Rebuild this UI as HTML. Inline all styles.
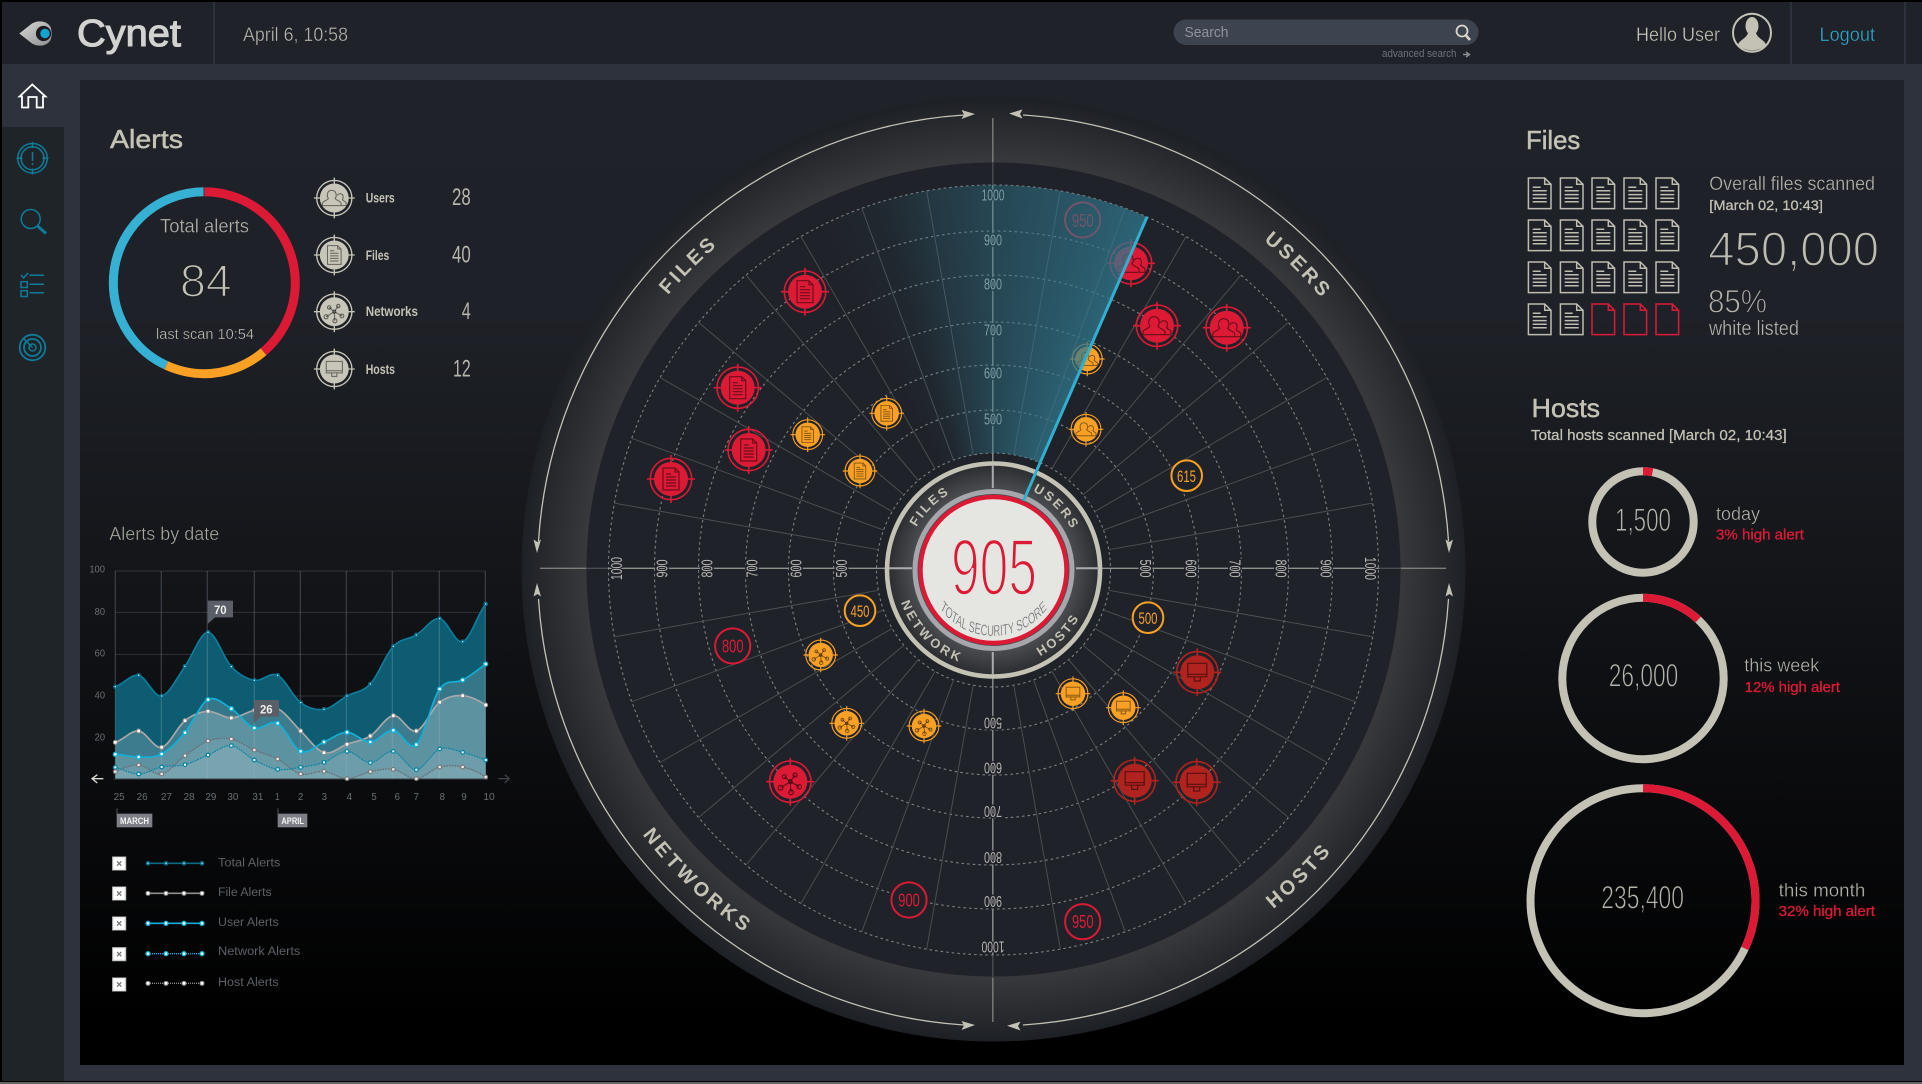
<!DOCTYPE html>
<html><head><meta charset="utf-8"><title>Cynet</title>
<style>
html,body{margin:0;padding:0;background:#000;width:1922px;height:1084px;overflow:hidden}
svg{display:block;position:absolute;left:0;top:0}
text{font-family:"Liberation Sans",sans-serif;fill:#c4c2b5}
.t{stroke:#1e2127;stroke-width:.35}
.d{stroke:#0d0e11;stroke-width:.35}
.h{font-size:26px;stroke:#c4c2b5;stroke-width:.5}
.ax{font-size:16px;fill:#b4b6b2;stroke:#1f2228;stroke-width:3px;paint-order:stroke}
.arc{font-size:20px;font-weight:bold;letter-spacing:3px;fill:#c4c2b5;text-anchor:middle}
.arc2{font-size:13px;font-weight:bold;letter-spacing:2.4px;fill:#c4c2b5;text-anchor:middle}
.ct{font-size:14px;font-weight:bold}
.n{font-size:24px;fill:#b5b5ac}
.rr{font-size:18px;fill:#dc1a36}
.ro{font-size:17px;fill:#f9a025}
.c{font-size:30px;fill:#6b6e73}
.lg{font-size:36px;fill:#5d6066}
</style></head><body>
<svg width="1922" height="1084" viewBox="0 0 1922 1084" xmlns="http://www.w3.org/2000/svg">
<defs>
<linearGradient id="bg" gradientUnits="userSpaceOnUse" x1="0" y1="80" x2="0" y2="1064">
<stop offset="0" stop-color="#1f2228"/><stop offset=".24" stop-color="#1e2127"/><stop offset=".96" stop-color="#000"/></linearGradient>
<radialGradient id="band" gradientUnits="userSpaceOnUse" cx="993.5" cy="569.5" r="472">
<stop offset=".862" stop-color="#38393c"/><stop offset="1" stop-color="#1d2025"/></radialGradient>
<radialGradient id="band2" gradientUnits="userSpaceOnUse" cx="993.5" cy="570" r="106">
<stop offset=".76" stop-color="#4b4c4f"/><stop offset="1" stop-color="#2a2c30"/></radialGradient>
<linearGradient id="logo" x1="0" y1="0" x2="1" y2="1"><stop offset="0" stop-color="#d8d8d8"/><stop offset="1" stop-color="#8f8f8f"/></linearGradient>
<path id="s" d="M993.5 453V185" fill="none" stroke="#4b4e52" stroke-width="1"/>
<path id="pF" d="M567.5 570A426 426 0 0 1 993.5 144"/>
<path id="pU" d="M993.5 144A426 426 0 0 1 1419.5 570"/>
<path id="pN" d="M554 570A439.5 439.5 0 0 0 993.5 1009.5"/>
<path id="pH" d="M993.5 1009.5A439.5 439.5 0 0 0 1433 570"/>
<path id="iF" d="M905.5 570A88 88 0 0 1 993.5 482"/>
<path id="iU" d="M993.5 482A88 88 0 0 1 1081.5 570"/>
<path id="iN" d="M895.5 570A98 98 0 0 0 993.5 668"/>
<path id="iH" d="M993.5 668A98 98 0 0 0 1091.5 570"/>
<path id="iS" d="M-110 0A110 66 0 0 0 110 0"/>
<g id="tg"><circle r="17" fill="currentColor"/><circle r="20.7" fill="none" stroke="currentColor" stroke-width="1.6"/><path d="M0-24V-16.5M0 24V16.5M-24 0H-16.5M24 0H16.5" stroke="currentColor" stroke-width="1.6"/></g>
<g id="mF"><use href="#tg"/><path d="M-8-11H4L8-7V11H-8ZM4-11V-7H8M-5-5H0M-5-2H5M-5 1H5M-5 4H5M-5 7H5" fill="none" stroke="#000" stroke-opacity=".5" stroke-width="1.2"/></g>
<g id="mU"><use href="#tg"/><path d="M-14 9V6.5C-14 3.5-8 3-7 .5C-9-2-9-9-3-9C3-9 3-2 1 .5C2 3 8 3.5 8 6.5V9ZM8 9H14V6C14 4 10 3.5 9.5 2C11 0 11-5 7-5C5-5 4-4 3.5-3" fill="none" stroke="#000" stroke-opacity=".5" stroke-width="1.2"/></g>
<g id="mN"><use href="#tg"/><path d="M0 0L-6-5M0 0L4.7-6.7M0 0L9 5M0 0L.7 10.7M0 0L-9.7 6" stroke="#000" stroke-opacity=".5" stroke-width="1.2"/><g fill="none" stroke="#000" stroke-opacity=".55" stroke-width="1.2"><circle r="1.8"/><circle cx="-6" cy="-5" r="2"/><circle cx="4.7" cy="-6.7" r="2"/><circle cx="9" cy="5" r="2.2"/><circle cx=".7" cy="10.7" r="2.4"/><circle cx="-9.7" cy="6" r="2.4"/></g></g>
<g id="mH"><use href="#tg"/><path d="M-9.5-9H9.5V4.5H-9.5ZM-9.5 2H9.5M-3 4.5V8.7H3V4.5" fill="none" stroke="#000" stroke-opacity=".5" stroke-width="1.2"/></g>
<g id="doc" fill="none" stroke="#bdbcaf" stroke-width="1.5"><path d="M.7.7H17L23.3 7V31.3H.7ZM17 .7V7H23.3"/><path d="M5 10H13M5 13.5H19M5 17.3H19M5 21H19M5 24.5H19"/></g>
<g id="docr" fill="none" stroke="#dc1a36" stroke-width="1.5"><path d="M.7.7H17L23.3 7V31.3H.7ZM17 .7V7H23.3"/></g>
<g id="pT"><circle r="7" fill="#0b6a85"/><circle r="2" fill="#dff"/></g>
<g id="pW"><circle r="7.5" fill="#8f8f8f"/><rect x="-4" y="-4" width="8" height="8" rx="2" fill="#fff"/></g>
<g id="pC"><circle r="8" fill="#12b0d8"/><rect x="-3.5" y="-3.5" width="7" height="7" fill="#fff"/></g>
<g id="pN2"><circle r="7.5" fill="#0c86a6"/><rect x="-3" y="-3" width="6" height="6" fill="#fff"/></g>
<g id="pH2"><circle r="7.5" fill="#77777b"/><rect x="-3.5" y="-3.5" width="7" height="7" fill="#eee"/></g>
<g id="cb"><rect x="-20" y="-20" width="41" height="41" fill="#ececec" stroke="#8a8a8a" stroke-width="2"/><rect x="-15" y="-15" width="31" height="31" fill="#fff"/><path d="M-6-6L7 7M7-6L-6 7" stroke="#777" stroke-width="4"/></g>
</defs>

<!-- frame -->
<rect width="1922" height="1084" fill="#000"/>
<rect y="1082" width="1922" height="2" fill="#666"/>
<rect x="2" y="2" width="1920" height="1079" fill="#2d323c"/>
<rect x="2" y="2" width="1920" height="62" fill="#1f2228"/>
<rect x="2" y="127" width="62" height="954" fill="#1f2429"/>
<rect x="80" y="80" width="1824" height="985" fill="url(#bg)"/>
<rect x="213" y="2" width="2" height="62" fill="#2d323c"/>
<rect x="1790" y="2" width="2" height="62" fill="#2d323c"/>
<rect x="1904" y="2" width="2" height="62" fill="#2d323c"/>

<!-- logo -->
<path d="M19.3 33.5L32 23.5C38 20 47 20.5 50.5 27C52 31 52 36 50.5 40C47 46.5 38 47 32 43.5Z" fill="url(#logo)"/>
<circle cx="43.5" cy="33.5" r="7.6" fill="#1a1c20"/><circle cx="45" cy="33.5" r="4.7" fill="#15a3cf"/>
<text x="77" y="46" font-size="38" textLength="104" lengthAdjust="spacingAndGlyphs" style="fill:#d2d2d0;stroke:#d2d2d0;stroke-width:1.1">Cynet</text>
<text class="t" x="243" y="41" font-size="19" textLength="105" lengthAdjust="spacingAndGlyphs" style="fill:#b5b5ac">April 6, 10:58</text>

<!-- search -->
<rect x="1173.5" y="19.5" width="305" height="25.5" rx="12.7" fill="#3e4350"/>
<text x="1184.5" y="37" font-size="15" textLength="44" lengthAdjust="spacingAndGlyphs" style="fill:#8f929a">Search</text>
<circle cx="1462" cy="31" r="5.5" fill="none" stroke="#d8d6ca" stroke-width="1.8"/><path d="M1466 35.5L1470 40" stroke="#d8d6ca" stroke-width="2.6"/>
<text x="1382" y="57" font-size="11" textLength="74.5" lengthAdjust="spacingAndGlyphs" style="fill:#6f7279">advanced search</text>
<path d="M1463 54.5H1468M1466 52L1469.5 54.5L1466 57" fill="none" stroke="#8a8d92" stroke-width="1.4"/>
<text class="t" x="1636" y="41" font-size="19" textLength="84" lengthAdjust="spacingAndGlyphs">Hello User</text>
<circle cx="1752" cy="32.7" r="19" fill="none" stroke="#c4c2b5" stroke-width="2"/>
<ellipse cx="1752" cy="26" rx="6.5" ry="9" fill="#c4c2b5"/>
<path d="M1738 45C1739 40 1746 39 1748 33H1756C1758 39 1765 40 1766 45Q1752 56 1738 45Z" fill="#c4c2b5"/>
<text class="t" x="1819.5" y="41" font-size="19" textLength="55.5" lengthAdjust="spacingAndGlyphs" style="fill:#2ea6c9">Logout</text>

<!-- sidebar icons -->
<path d="M19.5 96.5L32.3 84.5L45.5 96.5H43V107.5H36.7V97H28.3V107.5H22V96.5Z" fill="none" stroke="#fff" stroke-width="1.8"/>
<g fill="none" stroke="#0e7c99" stroke-width="1.5">
<circle cx="32.5" cy="158.3" r="14.8"/><circle cx="32.5" cy="158.3" r="11.5"/>
<path d="M32.5 142V148M32.5 168.5V174.5M16.5 158.3H22.5M42.5 158.3H48.5M32.5 152V161M32.5 163V165"/>
<circle cx="30.7" cy="219" r="9.5"/>
<path d="M37.5 226L46 233.5" stroke-width="3"/>
<path d="M21 275L23.5 278L28 273M29.5 275.3H44M29.5 284.3H44M29.5 292.7H44"/>
<rect x="21" y="281.7" width="6.3" height="5.8"/><rect x="21" y="290.7" width="6.3" height="5.8"/>
<circle cx="32.5" cy="347.5" r="12.8" stroke-width="1.8"/><circle cx="32.5" cy="347.5" r="8.5" stroke-width="1.8"/><circle cx="32.5" cy="347.5" r="3.5"/>
<path d="M32.5 347.5L23.5 338.5"/>
</g>

<!-- Alerts -->
<text class="h" x="110" y="148" textLength="73" lengthAdjust="spacingAndGlyphs">Alerts</text>
<g fill="none" stroke-width="9" transform="rotate(-90 204.3 282.7)">
<circle cx="204.3" cy="282.7" r="91" stroke="#36b1d3" pathLength="360" stroke-dasharray="155 360" stroke-dashoffset="-205"/>
<circle cx="204.3" cy="282.7" r="91" stroke="#f9a025" pathLength="360" stroke-dasharray="65.5 360" stroke-dashoffset="-139.5"/>
<circle cx="204.3" cy="282.7" r="91" stroke="#dc1a36" pathLength="360" stroke-dasharray="139.5 360"/>
</g>
<text class="t" x="160" y="232.7" font-size="19" textLength="89" lengthAdjust="spacingAndGlyphs" style="fill:#b5b5ac">Total alerts</text>
<text x="180" y="296.7" font-size="45" textLength="51.7" lengthAdjust="spacingAndGlyphs" style="fill:#c4c2b5;stroke:#1d2025;stroke-width:1.5">84</text>
<text class="t" x="156" y="339" font-size="15" textLength="98" lengthAdjust="spacingAndGlyphs">last scan 10:54</text>

<use href="#mU" transform="translate(334.3 198) scale(.85)" style="color:#c8c6b8"/>
<use href="#mF" transform="translate(334.3 255) scale(.85)" style="color:#c8c6b8"/>
<use href="#mN" transform="translate(334.3 311.7) scale(.85)" style="color:#c8c6b8"/>
<use href="#mH" transform="translate(334.3 369) scale(.85)" style="color:#c8c6b8"/>
<text class="ct" x="365.7" y="202.7" textLength="29" lengthAdjust="spacingAndGlyphs">Users</text>
<text class="ct" x="365.7" y="260" textLength="23.6" lengthAdjust="spacingAndGlyphs">Files</text>
<text class="ct" x="365.7" y="316" textLength="52.3" lengthAdjust="spacingAndGlyphs">Networks</text>
<text class="ct" x="365.7" y="374" textLength="29.3" lengthAdjust="spacingAndGlyphs">Hosts</text>
<text class="n" x="452" y="205" textLength="18.7" lengthAdjust="spacingAndGlyphs">28</text>
<text class="n" x="452" y="262.7" textLength="18.7" lengthAdjust="spacingAndGlyphs">40</text>
<text class="n" x="461.7" y="319" textLength="9" lengthAdjust="spacingAndGlyphs">4</text>
<text class="n" x="453" y="376.7" textLength="17.7" lengthAdjust="spacingAndGlyphs">12</text>

<text class="d" x="109.3" y="540" font-size="18" textLength="110" lengthAdjust="spacingAndGlyphs" style="fill:#a8a89f">Alerts by date</text>

<!-- Chart in 3x coordinates -->
<g transform="translate(60 500) scale(.33333)">
<text class="c" x="88" y="218" textLength="47" lengthAdjust="spacingAndGlyphs">100</text>
<text class="c" x="104" y="345" textLength="31" lengthAdjust="spacingAndGlyphs">80</text>
<text class="c" x="104" y="470" textLength="31" lengthAdjust="spacingAndGlyphs">60</text>
<text class="c" x="104" y="596" textLength="31" lengthAdjust="spacingAndGlyphs">40</text>
<text class="c" x="104" y="722" textLength="31" lengthAdjust="spacingAndGlyphs">20</text>
<path d="M166 213H1277M166 337H1277M166 463H1277M166 588H1277M166 713H1277" fill="none" stroke="#4c5057" stroke-width="3" stroke-dasharray="3 3"/>

<path fill="#0d5c72" d="M166 560C189 554 213 521.3 236 526S282 592.5 305 588S352 530.8 375 499S421 396.8 444 397S491 476 514 500S560 536.7 583 541S630 514.8 653 526S699 591 722 608S769 631.3 792 628S838 600.7 861 588S908 576.8 931 552S977 463.5 1000 439S1046 418.8 1069 405S1116 352.7 1139 356S1185 432.3 1208 425S1254 340 1277 312V838H166Z"/>
<path fill="#fff" fill-opacity=".2" d="M166 727C189 721 213 690.5 236 693S282 747.2 305 742S352 680 375 662S421 635.3 444 634S491 654.5 514 654S560 635.7 583 631S630 615.7 653 626S699 671 722 693S769 751.3 792 758S838 741.3 861 733S908 722.3 931 708S977 649.5 1000 647S1046 699.7 1069 693S1116 624.7 1139 607S1185 585.7 1208 587S1254 600 1277 615V838H166Z"/>
<path fill="#fff" fill-opacity=".17" d="M166 763C189 764 213 771.2 236 771S282 774.2 305 762S352 725.2 375 698S421 611 444 599S491 611.8 514 626S560 676.7 583 684S630 658.3 653 670S699 744.7 722 754S769 735.5 792 726S838 697 861 697S908 727 931 726S977 689.7 1000 691S1046 754.7 1069 734S1116 599.3 1139 567S1185 552.5 1208 540S1254 510 1277 492V838H166Z"/>
<path fill="#fff" fill-opacity=".08" d="M166 815C189 805 213 793.8 236 795S282 826.7 305 822S352 783.5 375 767S421 731.3 444 723S491 712.5 514 717S560 740 583 750S630 765 653 777S699 815.8 722 822S769 811.7 792 814S838 836 861 836S908 819.7 931 815S977 804.5 1000 808S1046 837.2 1069 836S1116 806.8 1139 801S1185 796 1208 801S1254 815 1277 831V838H166Z"/>
<path fill="#fff" fill-opacity=".1" d="M166 802C189 808 213 822 236 822S282 805.7 305 801S352 800 375 794S421 774.5 444 765S491 734.5 514 737S560 768.2 583 780S630 804.3 653 808S699 805.5 722 802S769 795 792 787S838 754 861 754S908 788 931 788S977 750.5 1000 754S1046 810 1069 809S1116 755.7 1139 747S1185 751.5 1208 757S1254 772 1277 780V838H166Z"/>

<path d="M166 213V838M304 213V838M442 213V838M583 213V838M721 213V838M859 213V838M997 213V838M1138 213V838M1276 213V838" stroke="#a4b4c4" stroke-opacity=".25" stroke-width="4"/>
<path d="M160 838H1284" stroke="#24272d" stroke-width="4"/>

<g fill="none">
<path stroke="#6c6e72" stroke-width="4" stroke-dasharray="5 3" d="M166 815C189 805 213 793.8 236 795S282 826.7 305 822S352 783.5 375 767S421 731.3 444 723S491 712.5 514 717S560 740 583 750S630 765 653 777S699 815.8 722 822S769 811.7 792 814S838 836 861 836S908 819.7 931 815S977 804.5 1000 808S1046 837.2 1069 836S1116 806.8 1139 801S1185 796 1208 801S1254 815 1277 831"/>
<path stroke="#0c86a6" stroke-width="4" stroke-dasharray="5 3" d="M166 802C189 808 213 822 236 822S282 805.7 305 801S352 800 375 794S421 774.5 444 765S491 734.5 514 737S560 768.2 583 780S630 804.3 653 808S699 805.5 722 802S769 795 792 787S838 754 861 754S908 788 931 788S977 750.5 1000 754S1046 810 1069 809S1116 755.7 1139 747S1185 751.5 1208 757S1254 772 1277 780"/>
<path stroke="#a9a9a9" stroke-width="5" d="M166 727C189 721 213 690.5 236 693S282 747.2 305 742S352 680 375 662S421 635.3 444 634S491 654.5 514 654S560 635.7 583 631S630 615.7 653 626S699 671 722 693S769 751.3 792 758S838 741.3 861 733S908 722.3 931 708S977 649.5 1000 647S1046 699.7 1069 693S1116 624.7 1139 607S1185 585.7 1208 587S1254 600 1277 615"/>
<path stroke="#12b0d8" stroke-width="5" d="M166 763C189 764 213 771.2 236 771S282 774.2 305 762S352 725.2 375 698S421 611 444 599S491 611.8 514 626S560 676.7 583 684S630 658.3 653 670S699 744.7 722 754S769 735.5 792 726S838 697 861 697S908 727 931 726S977 689.7 1000 691S1046 754.7 1069 734S1116 599.3 1139 567S1185 552.5 1208 540S1254 510 1277 492"/>
<path stroke="#0d7d9c" stroke-width="5" d="M166 560C189 554 213 521.3 236 526S282 592.5 305 588S352 530.8 375 499S421 396.8 444 397S491 476 514 500S560 536.7 583 541S630 514.8 653 526S699 591 722 608S769 631.3 792 628S838 600.7 861 588S908 576.8 931 552S977 463.5 1000 439S1046 418.8 1069 405S1116 352.7 1139 356S1185 432.3 1208 425S1254 340 1277 312"/>
</g>
<g>
<use href="#pT" x="166" y="560"/><use href="#pT" x="236" y="526"/><use href="#pT" x="305" y="588"/><use href="#pT" x="375" y="499"/><use href="#pT" x="444" y="397"/><use href="#pT" x="514" y="500"/><use href="#pT" x="583" y="541"/><use href="#pT" x="653" y="526"/><use href="#pT" x="722" y="608"/><use href="#pT" x="792" y="628"/><use href="#pT" x="861" y="588"/><use href="#pT" x="931" y="552"/><use href="#pT" x="1000" y="439"/><use href="#pT" x="1069" y="405"/><use href="#pT" x="1139" y="356"/><use href="#pT" x="1208" y="425"/><use href="#pT" x="1277" y="312"/>
<use href="#pW" x="166" y="727"/><use href="#pW" x="236" y="693"/><use href="#pW" x="305" y="742"/><use href="#pW" x="375" y="662"/><use href="#pW" x="444" y="634"/><use href="#pW" x="514" y="654"/><use href="#pW" x="583" y="631"/><use href="#pW" x="722" y="693"/><use href="#pW" x="792" y="758"/><use href="#pW" x="861" y="733"/><use href="#pW" x="931" y="708"/><use href="#pW" x="1000" y="647"/><use href="#pW" x="1069" y="693"/><use href="#pW" x="1139" y="607"/><use href="#pW" x="1208" y="587"/><use href="#pW" x="1277" y="615"/>
<use href="#pC" x="166" y="763"/><use href="#pC" x="236" y="771"/><use href="#pC" x="305" y="762"/><use href="#pC" x="375" y="698"/><use href="#pC" x="444" y="599"/><use href="#pC" x="514" y="626"/><use href="#pC" x="583" y="684"/><use href="#pC" x="653" y="670"/><use href="#pC" x="722" y="754"/><use href="#pC" x="792" y="726"/><use href="#pC" x="861" y="697"/><use href="#pC" x="931" y="726"/><use href="#pC" x="1000" y="691"/><use href="#pC" x="1069" y="734"/><use href="#pC" x="1139" y="567"/><use href="#pC" x="1208" y="540"/><use href="#pC" x="1277" y="492"/>
<use href="#pN2" x="166" y="802"/><use href="#pN2" x="236" y="822"/><use href="#pN2" x="305" y="801"/><use href="#pN2" x="375" y="794"/><use href="#pN2" x="444" y="765"/><use href="#pN2" x="514" y="737"/><use href="#pN2" x="583" y="780"/><use href="#pN2" x="653" y="808"/><use href="#pN2" x="722" y="802"/><use href="#pN2" x="792" y="787"/><use href="#pN2" x="861" y="754"/><use href="#pN2" x="931" y="788"/><use href="#pN2" x="1000" y="754"/><use href="#pN2" x="1069" y="809"/><use href="#pN2" x="1139" y="747"/><use href="#pN2" x="1208" y="757"/><use href="#pN2" x="1277" y="780"/>
<use href="#pH2" x="166" y="815"/><use href="#pH2" x="236" y="795"/><use href="#pH2" x="305" y="822"/><use href="#pH2" x="375" y="767"/><use href="#pH2" x="444" y="723"/><use href="#pH2" x="514" y="717"/><use href="#pH2" x="583" y="750"/><use href="#pH2" x="653" y="777"/><use href="#pH2" x="722" y="822"/><use href="#pH2" x="792" y="814"/><use href="#pH2" x="861" y="836"/><use href="#pH2" x="931" y="815"/><use href="#pH2" x="1000" y="808"/><use href="#pH2" x="1069" y="836"/><use href="#pH2" x="1139" y="801"/><use href="#pH2" x="1208" y="801"/><use href="#pH2" x="1277" y="831"/>
</g>
<path d="M443 302H519V352H465L443 372Z" fill="#5a5e66"/>
<text x="462" y="342" font-size="36" font-weight="bold" textLength="38" lengthAdjust="spacingAndGlyphs" style="fill:#eee">70</text>
<path d="M581 600H657V650H603L581 670Z" fill="#5a5e66"/>
<text x="600" y="640" font-size="36" font-weight="bold" textLength="38" lengthAdjust="spacingAndGlyphs" style="fill:#eee">26</text>
<path d="M130 836H97M112 824L96 836L112 849" fill="none" stroke="#d8d8d0" stroke-width="4"/>
<path d="M1347 836H1315M1334 824L1348 836L1334 849" fill="none" stroke="#3b3f48" stroke-width="4"/>
<g class="c">
<text class="c" x="161" y="900" textLength="33" lengthAdjust="spacingAndGlyphs">25</text>
<text class="c" x="230" y="900" textLength="33" lengthAdjust="spacingAndGlyphs">26</text>
<text class="c" x="303" y="900" textLength="33" lengthAdjust="spacingAndGlyphs">27</text>
<text class="c" x="371" y="900" textLength="33" lengthAdjust="spacingAndGlyphs">28</text>
<text class="c" x="436" y="900" textLength="33" lengthAdjust="spacingAndGlyphs">29</text>
<text class="c" x="502" y="900" textLength="33" lengthAdjust="spacingAndGlyphs">30</text>
<text class="c" x="577" y="900" textLength="33" lengthAdjust="spacingAndGlyphs">31</text>
<text class="c" x="645" y="900" textLength="14" lengthAdjust="spacingAndGlyphs">1</text>
<text class="c" x="714" y="900" textLength="16" lengthAdjust="spacingAndGlyphs">2</text>
<text class="c" x="785" y="900" textLength="16" lengthAdjust="spacingAndGlyphs">3</text>
<text class="c" x="860" y="900" textLength="16" lengthAdjust="spacingAndGlyphs">4</text>
<text class="c" x="934" y="900" textLength="16" lengthAdjust="spacingAndGlyphs">5</text>
<text class="c" x="1004" y="900" textLength="16" lengthAdjust="spacingAndGlyphs">6</text>
<text class="c" x="1061" y="900" textLength="16" lengthAdjust="spacingAndGlyphs">7</text>
<text class="c" x="1139" y="900" textLength="16" lengthAdjust="spacingAndGlyphs">8</text>
<text class="c" x="1204" y="900" textLength="16" lengthAdjust="spacingAndGlyphs">9</text>
<text class="c" x="1270" y="900" textLength="34" lengthAdjust="spacingAndGlyphs">10</text>
</g>
<path d="M171 925V941M654 925V941" stroke="#55585e" stroke-width="3"/>
<rect x="170" y="941" width="107" height="41" fill="#7e8087"/>
<rect x="653" y="941" width="89" height="41" fill="#7e8087"/>
<text x="180" y="972" font-size="28" font-weight="bold" textLength="87" lengthAdjust="spacingAndGlyphs" style="fill:#f2f2f2">MARCH</text>
<text x="664" y="972" font-size="28" font-weight="bold" textLength="68" lengthAdjust="spacingAndGlyphs" style="fill:#f2f2f2">APRIL</text>

<use href="#cb" x="177" y="1090"/><use href="#cb" x="177" y="1180"/><use href="#cb" x="177" y="1270"/><use href="#cb" x="177" y="1362"/><use href="#cb" x="177" y="1453"/>
<path d="M264 1090H426" stroke="#0b6a85" stroke-width="5"/>
<path d="M264 1180H426" stroke="#8f8f8f" stroke-width="5"/>
<path d="M264 1270H426" stroke="#12b0d8" stroke-width="5"/>
<path d="M264 1361H426" stroke="#12b0d8" stroke-width="4" stroke-dasharray="3 3"/>
<path d="M264 1450H426" stroke="#8f8f8f" stroke-width="4" stroke-dasharray="3 3"/>
<use href="#pT" x="264" y="1090"/><use href="#pT" x="318" y="1090"/><use href="#pT" x="372" y="1090"/><use href="#pT" x="426" y="1090"/>
<use href="#pW" x="264" y="1180"/><use href="#pW" x="318" y="1180"/><use href="#pW" x="372" y="1180"/><use href="#pW" x="426" y="1180"/>
<use href="#pC" x="264" y="1270"/><use href="#pC" x="318" y="1270"/><use href="#pC" x="372" y="1270"/><use href="#pC" x="426" y="1270"/>
<use href="#pC" x="264" y="1361"/><use href="#pC" x="318" y="1361"/><use href="#pC" x="372" y="1361"/><use href="#pC" x="426" y="1361"/>
<use href="#pW" x="264" y="1450"/><use href="#pW" x="318" y="1450"/><use href="#pW" x="372" y="1450"/><use href="#pW" x="426" y="1450"/>
<text class="lg" x="474" y="1100" textLength="187" lengthAdjust="spacingAndGlyphs">Total Alerts</text>
<text class="lg" x="474" y="1188" textLength="161" lengthAdjust="spacingAndGlyphs">File Alerts</text>
<text class="lg" x="474" y="1278" textLength="182" lengthAdjust="spacingAndGlyphs">User Alerts</text>
<text class="lg" x="474" y="1365" textLength="247" lengthAdjust="spacingAndGlyphs">Network Alerts</text>
<text class="lg" x="474" y="1458" textLength="182" lengthAdjust="spacingAndGlyphs">Host Alerts</text>
</g>

<!-- Radar -->
<circle cx="993.5" cy="569.5" r="472" fill="url(#band)"/>
<circle cx="993.5" cy="569.5" r="407" fill="#1f2228"/>
<g fill="none" stroke="#c4c2b5" stroke-width="1.3">
<path d="M538.5 541A456 456 0 0 1 964 115"/>
<path d="M1023 115A456 456 0 0 1 1448.5 541"/>
<path d="M1448.5 599A456 456 0 0 1 1023 1025"/>
<path d="M538.5 599A456 456 0 0 0 964 1025"/>
</g>
<g fill="#c4c2b5">
<polygon points="975,114 961.5,110 964,114.5 961.5,119"/>
<polygon points="537,553 533.5,539.5 537.5,542 541,539.5"/>
<polygon points="1009,113.5 1022.5,109.5 1020,114 1022.5,118.5"/>
<polygon points="1449,553 1445.5,539.5 1449.5,542 1453,539.5"/>
<polygon points="1449,583 1445.5,596.5 1449.5,594 1453,596.5"/>
<polygon points="1007,1025.7 1020.5,1021.7 1018,1026 1020.5,1030.5"/>
<polygon points="537,583 533.5,596.5 537.5,594 541,596.5"/>
<polygon points="975,1025 961.5,1021 964,1025.5 961.5,1030"/>
</g>
<text class="arc"><textPath href="#pF" startOffset="50%">FILES</textPath></text>
<text class="arc"><textPath href="#pU" startOffset="50%">USERS</textPath></text>
<text class="arc" style="letter-spacing:3.5px"><textPath href="#pN" startOffset="51.6%">NETWORKS</textPath></text>
<text class="arc"><textPath href="#pH" startOffset="50%">HOSTS</textPath></text>

<path d="M992.8 118V162M992.8 978V1022M540 568.3H586M1401 568.3H1446" stroke="#7d7e7a" stroke-width="1.4"/>
<path d="M992.8 162V185M992.8 955V978M586 568.3H608M1379 568.3H1401" stroke="#4a4d52" stroke-width="1.4"/>

<g fill="none" stroke="#7d8084" stroke-width="1.1" stroke-dasharray="2.6 3">
<circle cx="993.5" cy="570" r="385"/><circle cx="993.5" cy="570" r="339"/><circle cx="993.5" cy="570" r="295"/><circle cx="993.5" cy="570" r="248"/><circle cx="993.5" cy="570" r="205"/><circle cx="993.5" cy="570" r="160"/><circle cx="993.5" cy="570" r="117"/>
</g>
<g>
<use href="#s" transform="rotate(10 993.5 570)"/><use href="#s" transform="rotate(20 993.5 570)"/><use href="#s" transform="rotate(30 993.5 570)"/><use href="#s" transform="rotate(40 993.5 570)"/><use href="#s" transform="rotate(50 993.5 570)"/><use href="#s" transform="rotate(60 993.5 570)"/><use href="#s" transform="rotate(70 993.5 570)"/><use href="#s" transform="rotate(80 993.5 570)"/>
<use href="#s" transform="rotate(100 993.5 570)"/><use href="#s" transform="rotate(110 993.5 570)"/><use href="#s" transform="rotate(120 993.5 570)"/><use href="#s" transform="rotate(130 993.5 570)"/><use href="#s" transform="rotate(140 993.5 570)"/><use href="#s" transform="rotate(150 993.5 570)"/><use href="#s" transform="rotate(160 993.5 570)"/><use href="#s" transform="rotate(170 993.5 570)"/>
<use href="#s" transform="rotate(190 993.5 570)"/><use href="#s" transform="rotate(200 993.5 570)"/><use href="#s" transform="rotate(210 993.5 570)"/><use href="#s" transform="rotate(220 993.5 570)"/><use href="#s" transform="rotate(230 993.5 570)"/><use href="#s" transform="rotate(240 993.5 570)"/><use href="#s" transform="rotate(250 993.5 570)"/><use href="#s" transform="rotate(260 993.5 570)"/>
<use href="#s" transform="rotate(280 993.5 570)"/><use href="#s" transform="rotate(290 993.5 570)"/><use href="#s" transform="rotate(300 993.5 570)"/><use href="#s" transform="rotate(310 993.5 570)"/><use href="#s" transform="rotate(320 993.5 570)"/><use href="#s" transform="rotate(330 993.5 570)"/><use href="#s" transform="rotate(340 993.5 570)"/><use href="#s" transform="rotate(350 993.5 570)"/>
</g>
<path d="M992.8 185V462M992.8 678V955M608 568.3H885M1102 568.3H1379" stroke="#8f918f" stroke-width="1.4"/>

<!-- axis labels -->
<g>
<text class="ax" transform="translate(993 195)" x="-11.5" y="5.5" textLength="23" lengthAdjust="spacingAndGlyphs">1000</text>
<text class="ax" transform="translate(993 240)" x="-9" y="5.5" textLength="18" lengthAdjust="spacingAndGlyphs">900</text>
<text class="ax" transform="translate(993 284)" x="-9" y="5.5" textLength="18" lengthAdjust="spacingAndGlyphs">800</text>
<text class="ax" transform="translate(993 330)" x="-9" y="5.5" textLength="18" lengthAdjust="spacingAndGlyphs">700</text>
<text class="ax" transform="translate(993 373)" x="-9" y="5.5" textLength="18" lengthAdjust="spacingAndGlyphs">600</text>
<text class="ax" transform="translate(993 419)" x="-9" y="5.5" textLength="18" lengthAdjust="spacingAndGlyphs">500</text>
<text class="ax" transform="translate(993 723) rotate(180)" x="-9" y="5.5" textLength="18" lengthAdjust="spacingAndGlyphs">500</text>
<text class="ax" transform="translate(993 768) rotate(180)" x="-9" y="5.5" textLength="18" lengthAdjust="spacingAndGlyphs">600</text>
<text class="ax" transform="translate(993 811.7) rotate(180)" x="-9" y="5.5" textLength="18" lengthAdjust="spacingAndGlyphs">700</text>
<text class="ax" transform="translate(993 857.7) rotate(180)" x="-9" y="5.5" textLength="18" lengthAdjust="spacingAndGlyphs">800</text>
<text class="ax" transform="translate(993 901.7) rotate(180)" x="-9" y="5.5" textLength="18" lengthAdjust="spacingAndGlyphs">900</text>
<text class="ax" transform="translate(993 947) rotate(180)" x="-11.5" y="5.5" textLength="23" lengthAdjust="spacingAndGlyphs">1000</text>
<text class="ax" transform="translate(616.7 568.5) rotate(-90)" x="-11.5" y="5.5" textLength="23" lengthAdjust="spacingAndGlyphs">1000</text>
<text class="ax" transform="translate(662 568.5) rotate(-90)" x="-9" y="5.5" textLength="18" lengthAdjust="spacingAndGlyphs">900</text>
<text class="ax" transform="translate(707 568.5) rotate(-90)" x="-9" y="5.5" textLength="18" lengthAdjust="spacingAndGlyphs">800</text>
<text class="ax" transform="translate(752 568.5) rotate(-90)" x="-9" y="5.5" textLength="18" lengthAdjust="spacingAndGlyphs">700</text>
<text class="ax" transform="translate(796 568.5) rotate(-90)" x="-9" y="5.5" textLength="18" lengthAdjust="spacingAndGlyphs">600</text>
<text class="ax" transform="translate(841.7 568.5) rotate(-90)" x="-9" y="5.5" textLength="18" lengthAdjust="spacingAndGlyphs">500</text>
<text class="ax" transform="translate(1145.7 568.5) rotate(90)" x="-9" y="5.5" textLength="18" lengthAdjust="spacingAndGlyphs">500</text>
<text class="ax" transform="translate(1191 568.5) rotate(90)" x="-9" y="5.5" textLength="18" lengthAdjust="spacingAndGlyphs">600</text>
<text class="ax" transform="translate(1235 568.5) rotate(90)" x="-9" y="5.5" textLength="18" lengthAdjust="spacingAndGlyphs">700</text>
<text class="ax" transform="translate(1281 568.5) rotate(90)" x="-9" y="5.5" textLength="18" lengthAdjust="spacingAndGlyphs">800</text>
<text class="ax" transform="translate(1326 568.5) rotate(90)" x="-9" y="5.5" textLength="18" lengthAdjust="spacingAndGlyphs">900</text>
<text class="ax" transform="translate(1370.7 568.5) rotate(90)" x="-11.5" y="5.5" textLength="23" lengthAdjust="spacingAndGlyphs">1000</text>
</g>

<!-- score rings -->
<g fill="#1f2228" stroke-width="2">
<circle cx="1082.7" cy="220" r="17.6" stroke="#dc1a36"/>
<circle cx="1186.7" cy="475.7" r="15.3" stroke="#f9a025"/>
<circle cx="860" cy="610.7" r="15.3" stroke="#f9a025"/>
<circle cx="732.7" cy="646" r="17.6" stroke="#dc1a36"/>
<circle cx="909" cy="900" r="17.6" stroke="#dc1a36"/>
<circle cx="1148" cy="617.7" r="15.3" stroke="#f9a025"/>
<circle cx="1082.7" cy="921.7" r="17.6" stroke="#dc1a36"/>
</g>
<text class="rr" x="1072" y="227" textLength="21.5" lengthAdjust="spacingAndGlyphs">950</text>
<text class="ro" x="1177" y="482" textLength="19" lengthAdjust="spacingAndGlyphs">615</text>
<text class="ro" x="850.5" y="617" textLength="19" lengthAdjust="spacingAndGlyphs">450</text>
<text class="rr" x="722" y="652.5" textLength="21.5" lengthAdjust="spacingAndGlyphs">800</text>
<text class="rr" x="898.3" y="906.5" textLength="21.5" lengthAdjust="spacingAndGlyphs">900</text>
<text class="ro" x="1138.5" y="624" textLength="19" lengthAdjust="spacingAndGlyphs">500</text>
<text class="rr" x="1072" y="928" textLength="21.5" lengthAdjust="spacingAndGlyphs">950</text>

<!-- markers -->
<g style="color:#dc1a36">
<use href="#mF" transform="translate(805 291.7)"/>
<use href="#mF" transform="translate(737.7 387.7)"/>
<use href="#mF" transform="translate(748.7 450)"/>
<use href="#mF" transform="translate(671 479)"/>
<use href="#mU" transform="translate(1131 263.3)"/>
<use href="#mU" transform="translate(1157 325.7)"/>
<use href="#mU" transform="translate(1226.7 327.7)"/>
<use href="#mN" transform="translate(790.3 781.7)"/>
</g>
<g style="color:#f9a025">
<use href="#mF" transform="translate(886.7 413.3) scale(.72)"/>
<use href="#mF" transform="translate(807.7 434.7) scale(.72)"/>
<use href="#mF" transform="translate(860 471) scale(.72)"/>
<use href="#mU" transform="translate(1087.3 359) scale(.72)"/>
<use href="#mU" transform="translate(1086 429.3) scale(.72)"/>
<use href="#mN" transform="translate(820.7 655) scale(.72)"/>
<use href="#mN" transform="translate(846.7 723.3) scale(.72)"/>
<use href="#mN" transform="translate(924 726) scale(.72)"/>
<use href="#mH" transform="translate(1073 693.7) scale(.72)"/>
<use href="#mH" transform="translate(1123.3 707.7) scale(.72)"/>
</g>
<g style="color:#b0231f">
<use href="#mH" transform="translate(1197.3 672.3)"/>
<use href="#mH" transform="translate(1134.7 780.7)"/>
<use href="#mH" transform="translate(1196.7 782.3)"/>
</g>

<!-- wedge -->
<foreignObject x="0" y="0" width="1922" height="1084">
<div xmlns="http://www.w3.org/1999/xhtml" style="width:1922px;height:1084px;background:conic-gradient(from -28deg at 993.5px 570px,rgba(48,120,142,0) 0deg,rgba(48,120,142,.08) 11deg,rgba(48,120,142,.25) 18.5deg,rgba(48,120,142,.42) 28deg,rgba(48,120,142,.75) 51.5deg,rgba(48,120,142,0) 51.5deg);clip-path:path('M812.8 230A385 385 0 0 1 1147 217L1040.1 462.7A117 117 0 0 0 938.6 466.7Z')"></div>
</foreignObject>

<!-- centre -->
<circle cx="993.5" cy="570" r="106.5" fill="url(#band2)" stroke="#c4c2b5" stroke-width="4.6"/>
<path d="M992.8 465V488M992.8 652V675M889 568.3H912M1076 568.3H1099" stroke="#a9abad" stroke-width="2"/>
<text class="arc2"><textPath href="#iF" startOffset="50%">FILES</textPath></text>
<text class="arc2"><textPath href="#iU" startOffset="50%">USERS</textPath></text>
<text class="arc2" style="letter-spacing:2.9px"><textPath href="#iN" startOffset="50%">NETWORK</textPath></text>
<text class="arc2"><textPath href="#iH" startOffset="50%">HOSTS</textPath></text>
<circle cx="993.5" cy="570" r="78.5" fill="none" stroke="#a5a7ad" stroke-width="5"/>
<path d="M1023.5 500.8L1147 217" stroke="#2fb0d0" stroke-width="3"/>
<circle cx="993.5" cy="570" r="73" fill="#e5e6e1" stroke="#dc1a36" stroke-width="4.4"/>
<text x="951" y="594.3" font-size="80" textLength="86" lengthAdjust="spacingAndGlyphs" style="fill:#dc1a36;stroke:#e5e6e1;stroke-width:2.6">905</text>
<g transform="translate(993.5 570) scale(.6 1)">
<text style="font-size:15.5px;fill:#6a6b6c;stroke:#e5e6e1;stroke-width:.3;text-anchor:middle"><textPath href="#iS" startOffset="50%">TOTAL SECURITY SCORE</textPath></text>
</g>

<!-- Files -->
<text class="h" x="1526" y="149" textLength="54.3" lengthAdjust="spacingAndGlyphs">Files</text>
<g>
<use href="#doc" x="1527.7" y="177.3"/><use href="#doc" x="1559.7" y="177.3"/><use href="#doc" x="1591.3" y="177.3"/><use href="#doc" x="1623.3" y="177.3"/><use href="#doc" x="1655.3" y="177.3"/>
<use href="#doc" x="1527.7" y="219.3"/><use href="#doc" x="1559.7" y="219.3"/><use href="#doc" x="1591.3" y="219.3"/><use href="#doc" x="1623.3" y="219.3"/><use href="#doc" x="1655.3" y="219.3"/>
<use href="#doc" x="1527.7" y="261.3"/><use href="#doc" x="1559.7" y="261.3"/><use href="#doc" x="1591.3" y="261.3"/><use href="#doc" x="1623.3" y="261.3"/><use href="#doc" x="1655.3" y="261.3"/>
<use href="#doc" x="1527.7" y="303.3"/><use href="#doc" x="1559.7" y="303.3"/><use href="#docr" x="1591.3" y="303.3"/><use href="#docr" x="1623.3" y="303.3"/><use href="#docr" x="1655.3" y="303.3"/>
</g>
<text class="t" x="1709.3" y="190" font-size="19.5" textLength="165.7" lengthAdjust="spacingAndGlyphs" style="fill:#b5b5ac">Overall files scanned</text>
<text x="1709.3" y="210" font-size="14" textLength="113.7" lengthAdjust="spacingAndGlyphs" style="stroke:#c4c2b5;stroke-width:.3">[March 02, 10:43]</text>
<text x="1708.3" y="265.7" font-size="48" textLength="170.7" lengthAdjust="spacingAndGlyphs" style="fill:#bdbcb0;stroke:#1e2127;stroke-width:1.5">450,000</text>
<text x="1708" y="312.7" font-size="32" textLength="59" lengthAdjust="spacingAndGlyphs" style="fill:#b5b5ac;stroke:#1e2127;stroke-width:1">85%</text>
<text class="t" x="1709" y="335" font-size="20" textLength="90" lengthAdjust="spacingAndGlyphs" style="fill:#b5b5ac">white listed</text>

<!-- Hosts -->
<text class="h" x="1531.7" y="417" textLength="68.3" lengthAdjust="spacingAndGlyphs">Hosts</text>
<text x="1531" y="440" font-size="14.5" textLength="255.7" lengthAdjust="spacingAndGlyphs" style="stroke:#c4c2b5;stroke-width:.25">Total hosts scanned  [March 02, 10:43]</text>

<g fill="none" stroke-width="8">
<circle cx="1643" cy="522" r="50.7" stroke="#c4c2b5"/>
<circle cx="1643" cy="522" r="50.7" stroke="#dc1a36" pathLength="100" stroke-dasharray="3 100" transform="rotate(-90 1643 522)"/>
<circle cx="1643" cy="678.5" r="80.7" stroke="#c4c2b5"/>
<circle cx="1643" cy="678.5" r="80.7" stroke="#dc1a36" pathLength="100" stroke-dasharray="12 100" transform="rotate(-90 1643 678.5)"/>
<circle cx="1643" cy="900.7" r="112.5" stroke="#c4c2b5"/>
<circle cx="1643" cy="900.7" r="112.5" stroke="#dc1a36" pathLength="100" stroke-dasharray="32 100" transform="rotate(-90 1643 900.7)"/>
</g>
<text x="1615" y="530.8" font-size="32" textLength="56" lengthAdjust="spacingAndGlyphs" style="fill:#b5b5ac;stroke:#171a1e;stroke-width:.9">1,500</text>
<text x="1608.7" y="686.6" font-size="32" textLength="69.6" lengthAdjust="spacingAndGlyphs" style="fill:#b5b5ac;stroke:#111317;stroke-width:.9">26,000</text>
<text x="1601.3" y="908.5" font-size="32" textLength="82.7" lengthAdjust="spacingAndGlyphs" style="fill:#b5b5ac;stroke:#08090a;stroke-width:.9">235,400</text>
<text class="d" x="1716" y="520" font-size="18" textLength="44" lengthAdjust="spacingAndGlyphs" style="fill:#b5b5ac">today</text>
<text x="1716" y="539.6" font-size="14.5" textLength="88" lengthAdjust="spacingAndGlyphs" style="fill:#dc1a36;stroke:#dc1a36;stroke-width:.3">3% high alert</text>
<text class="d" x="1744.3" y="671.6" font-size="18" textLength="75" lengthAdjust="spacingAndGlyphs" style="fill:#b5b5ac">this week</text>
<text x="1744.7" y="692" font-size="14.5" textLength="95.3" lengthAdjust="spacingAndGlyphs" style="fill:#dc1a36;stroke:#dc1a36;stroke-width:.3">12% high alert</text>
<text class="d" x="1778.7" y="896.3" font-size="18" textLength="86.6" lengthAdjust="spacingAndGlyphs" style="fill:#b5b5ac">this month</text>
<text x="1778.7" y="916" font-size="14.5" textLength="96.3" lengthAdjust="spacingAndGlyphs" style="fill:#dc1a36;stroke:#dc1a36;stroke-width:.3">32% high alert</text>
</svg>
</body></html>
